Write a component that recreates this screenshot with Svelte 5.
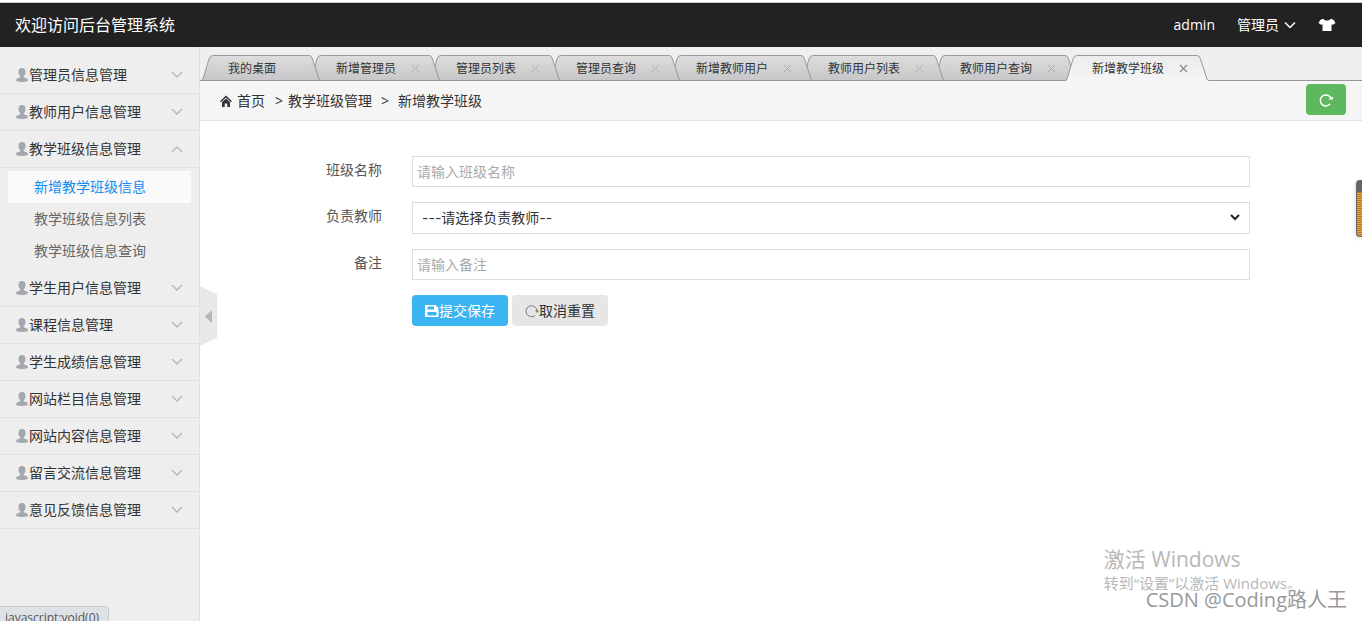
<script>
    let menus = [
        { name: "管理员信息管理" },
        { name: "教师用户信息管理" },
        {
            name: "教学班级信息管理",
            open: true,
            items: ["新增教学班级信息", "教学班级信息列表", "教学班级信息查询"],
        },
        { name: "学生用户信息管理" },
        { name: "课程信息管理" },
        { name: "学生成绩信息管理" },
        { name: "网站栏目信息管理" },
        { name: "网站内容信息管理" },
        { name: "留言交流信息管理" },
        { name: "意见反馈信息管理" },
    ];
    let currentItem = "新增教学班级信息";

    let tabs = [
        "我的桌面",
        "新增管理员",
        "管理员列表",
        "管理员查询",
        "新增教师用户",
        "教师用户列表",
        "教师用户查询",
        "新增教学班级",
    ];
    let activeTab = "新增教学班级";

    let className = "";
    let teacher = "";
    let remark = "";

    function toggle(menu) {
        menu.open = !menu.open;
        menus = menus;
    }

    function closeTab(tab) {
        tabs = tabs.filter((t) => t !== tab);
        if (activeTab === tab) {
            activeTab = tabs[tabs.length - 1];
        }
    }

    function reset() {
        className = "";
        teacher = "";
        remark = "";
    }
</script>

<svg class="defs" width="0" height="0" aria-hidden="true">
    <linearGradient id="tab-off" gradientUnits="userSpaceOnUse" x1="0" y1="0" x2="0" y2="26">
        <stop offset="0" stop-color="#dddddd" />
        <stop offset="1" stop-color="#c6c6c8" />
    </linearGradient>
    <linearGradient id="tab-on" gradientUnits="userSpaceOnUse" x1="0" y1="0" x2="0" y2="26">
        <stop offset="0" stop-color="#ececec" />
        <stop offset="1" stop-color="#f5f5f5" />
    </linearGradient>
</svg>

<div class="page">
    <header>
        <h1>欢迎访问后台管理系统</h1>
        <nav class="user">
            <span>admin</span>
            <button type="button" class="role">
                管理员
                <svg width="12" height="8" viewBox="0 0 12 8"><path d="M1 1.500l5 5 5-5" fill="none" stroke="#fff" stroke-width="1.5" /></svg>
            </button>
            <button type="button" aria-label="换肤">
                <svg width="18" height="14" viewBox="0 0 18 14"><path d="M5.500 1C7 3 11 3 12.500 1L14 1Q16 1.500 17.500 5L14.500 7 13.500 6V13H4.500V6L3.500 7 .5 5Q2 1.500 4 1Z" fill="#fff" /></svg>
            </button>
        </nav>
    </header>

    <div class="body">
        <aside>
            {#each menus as menu}
                <button type="button" class="menu" on:click={() => toggle(menu)}>
                    <svg width="12" height="14" viewBox="0 0 12 14"><path d="M6 0C8.500 0 9.500 1.500 9.500 4 9.500 6 8.800 7.400 7.700 8.200V9.200L11 10.500Q12 11 12 13 9 14 6 14T0 13Q0 11 1 10.500L4.300 9.200V8.200C3.200 7.400 2.500 6 2.500 4 2.500 1.500 3.500 0 6 0Z" fill="#a3a8b0" /></svg>
                    <span>{menu.name}</span>
                    <svg class="arrow" class:open={menu.open} width="12" height="8" viewBox="0 0 12 8"><path d="M1 1l5 5 5-5" fill="none" stroke="#b5b5b8" stroke-width="1.3" /></svg>
                </button>
                {#if menu.items && menu.open}
                    <ul>
                        {#each menu.items as item}
                            <li><a href="#add" class:current={item === currentItem} on:click={() => (currentItem = item)}>{item}</a></li>
                        {/each}
                    </ul>
                {/if}
            {/each}
        </aside>

        <main>
            <button type="button" class="fold" aria-label="收起菜单">
                <svg width="17" height="60" viewBox="0 0 17 60">
                    <path d="M0 0L17 8V52L0 60Z" fill="#e8e8e8" />
                    <path d="M12 24V37L5 30.500Z" fill="#b5b5b5" />
                </svg>
            </button>

            <div class="tabs">
                {#each tabs as tab, i}
                    <div class="tab" class:active={tab === activeTab} style:z-index={tab === activeTab ? 50 : tabs.length - i}>
                        <svg width="12" height="26" viewBox="0 0 12 26">
                            <path class="fill" d="M0 26Q1.500 25.500 2 24L8 4Q9 .5 12 .5V26Z" />
                            <path class="edge" d="M0 25.500Q1.500 25.500 2 24L8 4Q9 .5 12 .5" />
                            <path class="base" d="M1 25.500H12" />
                        </svg>
                        <div class="face">
                            <button type="button" class="name" on:click={() => (activeTab = tab)}>{tab}</button>
                            {#if i > 0}
                                <button type="button" class="close" aria-label="关闭" on:click={() => closeTab(tab)}>
                                    <svg width="9" height="9" viewBox="0 0 9 9"><path d="M1 1l7 7M8 1l-7 7" fill="none" /></svg>
                                </button>
                            {/if}
                        </div>
                        <svg width="12" height="26" viewBox="0 0 12 26">
                            <path class="fill" d="M0 .5Q2.500 .5 3.500 4L10 24Q10.500 25.500 12 26H0Z" />
                            <path class="edge" d="M0 .5Q2.500 .5 3.500 4L10 24Q10.500 25.500 12 25.500" />
                            <path class="base" d="M0 25.500H12" />
                        </svg>
                    </div>
                {/each}
            </div>

            <nav class="crumbs">
                <svg width="12" height="12" viewBox="0 0 12 12">
                    <path d="M0 6.300L6 .5 12 6.300 11 7.300 6 2.600 1 7.300Z" fill="#333" />
                    <path d="M2 7.200L6 3.500 10 7.200V12H7.300V8.500H4.700V12H2Z" fill="#333" />
                </svg>
                <a href="#home">首页</a>
                <span class="sep">&gt;</span>
                <span>教学班级管理</span>
                <span class="sep wide">&gt;</span>
                <span>新增教学班级</span>
                <button type="button" class="refresh" aria-label="刷新">
                    <svg width="14" height="14" viewBox="0 0 14 14">
                        <path d="M11 11A5.500 5.500 0 1 1 12 5.500" fill="none" stroke="#fff" stroke-width="1.5" />
                        <path d="M9 6.500H14V3.500Z" fill="#fff" />
                    </svg>
                </button>
            </nav>

            <form on:submit|preventDefault>
                <div class="row">
                    <label for="class-name">班级名称</label>
                    <input id="class-name" type="text" placeholder="请输入班级名称" bind:value={className} />
                </div>
                <div class="row">
                    <label for="teacher">负责教师</label>
                    <div class="select">
                        <select id="teacher" bind:value={teacher}>
                            <option value="">---请选择负责教师--</option>
                        </select>
                        <svg width="10" height="7" viewBox="0 0 10 7"><path d="M1 1l4 4 4-4" fill="none" stroke="#222" stroke-width="2" /></svg>
                    </div>
                </div>
                <div class="row">
                    <label for="remark">备注</label>
                    <input id="remark" type="text" placeholder="请输入备注" bind:value={remark} />
                </div>
                <div class="actions">
                    <button type="submit" class="save">
                        <svg width="14" height="14" viewBox="0 0 14 14"><path fill-rule="evenodd" d="M0 1H10.500L13.500 4V13H0ZM2.500 2.500V5.500H9V2.500ZM2.500 8V11.500H11.500V8Z" fill="#fff" /></svg>提交保存
                    </button>
                    <button type="button" class="reset" on:click={reset}>
                        <svg width="14" height="14" viewBox="0 0 14 14">
                            <path d="M10 11.500A5.500 5.500 0 1 1 12 7" fill="none" stroke="#777" />
                            <path d="M10 6.500H14L12 9Z" fill="#777" />
                        </svg>取消重置
                    </button>
                </div>
            </form>
        </main>
    </div>

    <div class="gauge"></div>
    <div class="activate">
        <p class="big">激活 Windows</p>
        <p>转到“设置”以激活 Windows。</p>
    </div>
    <div class="mark">CSDN @Coding路人王</div>
    <div class="status">javascript:void(0)</div>
</div>

<style>
    :global(body) {
        margin: 0;
    }

    .page {
        display: flex;
        flex-direction: column;
        height: 100vh;
        overflow: hidden;
        position: relative;
        box-sizing: border-box;
        padding-top: 2px;
        background: #fff;
        color: #333;
        font: 14px/20px "Open Sans", "Noto Sans CJK SC", sans-serif;
    }

    .defs {
        position: absolute;
    }

    svg {
        display: block;
        flex: none;
    }

    button {
        display: flex;
        align-items: center;
        margin: 0;
        padding: 0;
        border: 0;
        background: none;
        color: inherit;
        font: inherit;
        cursor: pointer;
    }

    a {
        color: inherit;
        text-decoration: none;
    }

    header {
        display: flex;
        align-items: center;
        justify-content: space-between;
        height: 44px;
        padding: 0 26px 0 15px;
        border-top: 1px solid #ccc;
        background: #222;
        color: #fff;
    }

    h1 {
        margin: 0;
        font-size: 16px;
        font-weight: normal;
    }

    .user {
        display: flex;
        align-items: center;
        gap: 22px;
    }

    .role {
        gap: 5px;
    }

    .body {
        display: flex;
        flex: 1;
        min-height: 0;
    }

    aside {
        flex: 0 0 200px;
        box-sizing: border-box;
        padding-top: 10px;
        border-right: 1px solid #e0e0e0;
        background: #eee;
    }

    .menu {
        width: 100%;
        height: 37px;
        padding: 0 16px;
        border-bottom: 1px solid #e2e2e2;
    }

    .menu span {
        margin-left: 1px;
    }

    .arrow {
        margin-left: auto;
    }

    .arrow.open {
        transform: rotate(180deg);
    }

    ul {
        margin: 0;
        padding: 3px 8px;
        list-style: none;
    }

    li a {
        display: block;
        padding-left: 26px;
        color: #666;
        line-height: 32px;
    }

    li a.current {
        background: #fafafa;
        color: #148cf1;
    }

    main {
        position: relative;
        flex: 1;
        min-width: 0;
    }

    .fold {
        position: absolute;
        left: 0;
        top: 239px;
    }

    .tabs {
        display: flex;
        height: 26px;
        padding: 8px 0 0 1px;
        background: linear-gradient(#999, #999) bottom / 100% 1px no-repeat #efeff1;
    }

    .tab {
        display: flex;
        position: relative;
        margin-right: -12px;
        font-size: 12px;
    }

    .face {
        display: flex;
        box-sizing: border-box;
        height: 26px;
        padding: 0 33px 0 15px;
        border-top: 1px solid #999;
        background: linear-gradient(#999, #999) bottom / 100% 1px no-repeat, linear-gradient(#ddd, #c6c6c8);
    }

    .face:has(.close) {
        padding-right: 9px;
    }

    .fill {
        fill: url(#tab-off);
    }

    .edge,
    .base {
        fill: none;
        stroke: #999;
    }

    .active .face {
        background: linear-gradient(#ececec, #f5f5f5);
    }

    .active .fill {
        fill: url(#tab-on);
    }

    .active .base {
        stroke: none;
    }

    .close {
        margin-left: 15px;
    }

    .close path {
        stroke: #a9afb5;
    }

    .active .close path {
        stroke: #90969c;
        stroke-width: 1.5;
    }

    .crumbs {
        display: flex;
        align-items: center;
        height: 39px;
        padding: 0 16px 0 20px;
        border-bottom: 1px solid #e5e5e5;
        background: #f5f5f5;
    }

    .crumbs a {
        margin-left: 5px;
    }

    .sep {
        margin: 0 5px 0 10px;
    }

    .sep.wide {
        margin: 0 9px;
    }

    .refresh {
        justify-content: center;
        width: 40px;
        height: 31px;
        margin: 0 0 2px auto;
        border-radius: 4px;
        background: #5eb95e;
    }

    form {
        padding: 35px 112px 0 0;
    }

    .row {
        display: flex;
        margin-bottom: 15px;
    }

    label {
        flex: 0 0 182px;
        margin-right: 30px;
        color: #555;
        line-height: 28px;
        text-align: right;
    }

    input,
    select {
        flex: 1;
        min-width: 0;
        box-sizing: border-box;
        height: 31px;
        padding: 0 4px;
        border: 1px solid #ddd;
        border-radius: 0;
        background: #fff;
        color: #333;
        font: inherit;
    }

    .select {
        display: flex;
        flex: 1;
        position: relative;
    }

    .select svg {
        position: absolute;
        right: 10px;
        top: 12px;
        pointer-events: none;
    }

    select {
        appearance: none;
        height: 32px;
        padding: 0 24px 0 9px;
        font-family: Inter, "Noto Sans CJK SC", sans-serif;
    }

    input::placeholder {
        color: #aaa;
    }

    .actions {
        display: flex;
        gap: 4px;
        margin-left: 212px;
    }

    .actions button {
        height: 31px;
        padding: 0 13px;
        border-radius: 4px;
    }

    .actions .save {
        background: #3bb4f2;
        color: #fff;
    }

    .actions .reset {
        background: #e6e6e6;
    }

    .gauge {
        position: absolute;
        right: 0;
        top: 180px;
        box-sizing: border-box;
        width: 6px;
        height: 57px;
        border: 1px solid #666;
        border-right: 0;
        border-top-width: 12px;
        border-radius: 4px 0 0 4px;
        background: repeating-linear-gradient(#a87a3c 0 1px, #ff9d1c 1px 2px);
        box-shadow: 0 1px 4px #ccc;
    }

    .activate {
        position: absolute;
        right: 60px;
        bottom: 28px;
        color: #b8b8b8;
        font-size: 15px;
    }

    .activate p {
        margin: 0;
    }

    .activate .big {
        font-size: 21px;
        line-height: 28px;
    }

    .mark {
        position: absolute;
        right: 15px;
        bottom: 6px;
        color: #999;
        font-size: 20px;
        line-height: 30px;
        text-shadow: -1px -1px #fff;
    }

    .status {
        position: absolute;
        left: 0;
        bottom: -8px;
        padding: 1px 9px 0 5px;
        border: 1px solid #c6c9ce;
        border-left: 0;
        border-radius: 0 4px 0 0;
        background: #dee1e6;
        color: #555;
        font-size: 12px;
    }
</style>
